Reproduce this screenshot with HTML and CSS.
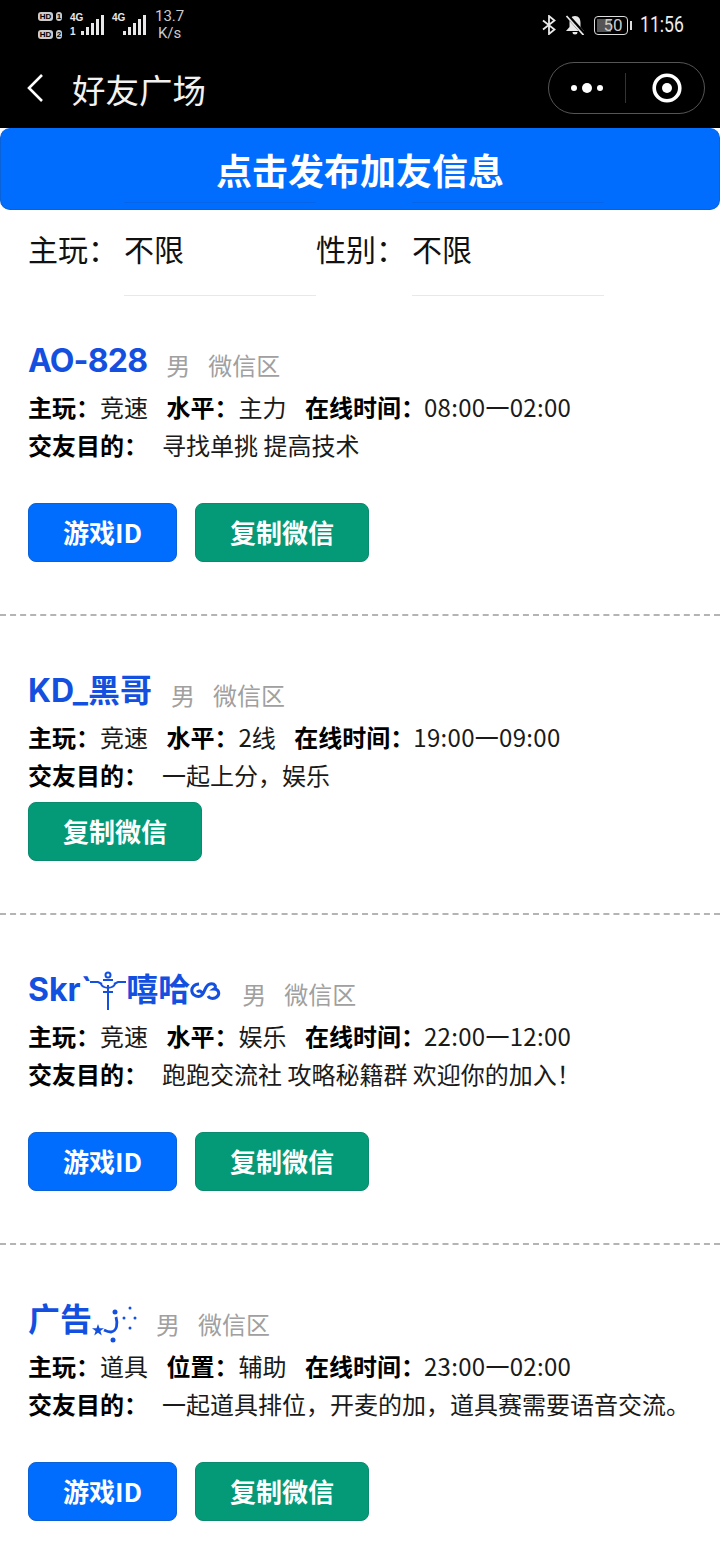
FILE: index.html
```html
<!DOCTYPE html>
<html lang="zh-CN">
<head>
    <meta charset="UTF-8">
    <meta name="viewport" content="width=device-width, initial-scale=1.0">
    <title>好友广场</title>
    <link rel="stylesheet" href="styles.css">
</head>
<body>
    <header class="top">
        <div class="status-bar">
            <div class="status-left">
                <div class="sim-col">
                    <div class="sim"><span class="hd">HD</span><span class="sim-no">1</span></div>
                    <div class="sim"><span class="hd">HD</span><span class="sim-no">2</span></div>
                </div>
                <div class="signal">
                    <div class="net"><span>4G</span><span>1</span></div>
                    <svg width="23" height="20" viewBox="0 0 23 20"><g fill="#e8e8e8"><rect x="0" y="16" width="3" height="4"/><rect x="5" y="12" width="3" height="8"/><rect x="10" y="8" width="3" height="12"/><rect x="15" y="4" width="3" height="16"/><rect x="20" y="0" width="3" height="20"/></g></svg>
                </div>
                <div class="signal">
                    <div class="net"><span>4G</span><span>&nbsp;</span></div>
                    <svg width="23" height="20" viewBox="0 0 23 20"><g fill="#e8e8e8"><rect x="0" y="16" width="3" height="4"/><rect x="5" y="12" width="3" height="8"/><rect x="10" y="8" width="3" height="12"/><rect x="15" y="4" width="3" height="16"/><rect x="20" y="0" width="3" height="20"/></g></svg>
                </div>
                <div class="speed">13.7<br>K/s</div>
            </div>
            <div class="status-right">
                <svg width="14" height="20" viewBox="0 0 14 20"><path d="M1 5.500 12.500 14.500 7 19V1l5.500 4.500L1 14.500" fill="none" stroke="#e8e8e8" stroke-width="1.800"/></svg>
                <svg width="20" height="20" viewBox="0 0 20 20"><path d="M10 1C6 1 4.500 4 4.500 8v4L1 16h18l-3.500-4V8C15.500 4 14 1 10 1zM7.500 17a2.500 2.500 0 0 0 5 0z" fill="#e8e8e8"/><path d="M2 0l17 19" stroke="#000" stroke-width="4"/><path d="M1.500 1l17 19" stroke="#e8e8e8" stroke-width="1.800"/></svg>
                <div class="battery"><div class="battery-body"><span class="battery-fill"></span><span class="battery-num">50</span></div><span class="battery-cap"></span></div>
                <span class="clock">11:56</span>
            </div>
        </div>
        <div class="nav-bar">
            <svg class="back" width="18" height="30" viewBox="0 0 18 30"><path d="M16 2 3 15l13 13" fill="none" stroke="#fff" stroke-width="2.600"/></svg>
            <div class="nav-title">好友广场</div>
            <div class="capsule">
                <div class="capsule-dots"><i></i><i class="big"></i><i></i></div>
                <div class="capsule-line"></div>
                <svg width="30" height="30" viewBox="0 0 30 30"><circle cx="15" cy="15" r="12.800" fill="none" stroke="#fff" stroke-width="3.600"/><circle cx="15" cy="15" r="5" fill="#fff"/></svg>
            </div>
        </div>
    </header>

    <div class="publish">点击发布加友信息</div>

    <div class="filters">
        <div class="filter"><span class="filter-label">主玩&#65306;</span><span class="filter-value">不限</span></div>
        <div class="filter"><span class="filter-label">性别&#65306;</span><span class="filter-value">不限</span></div>
    </div>

    <section class="card card-a">
        <div class="name-row"><span class="name"><span class="tight">AO-828</span></span><span class="meta">男</span><span class="meta">微信区</span></div>
        <div class="info"><b>主玩&#65306;</b>竞速<b class="next">水平&#65306;</b>主力<b class="next">在线时间&#65306;</b><span class="time">08:00一02:00</span></div>
        <div class="info"><b class="goal">交友目的&#65306;</b>寻找单挑 提高技术</div>
        <div class="btns btns-far"><div class="btn btn-blue">游戏ID</div><div class="btn btn-green">复制微信</div></div>
    </section>

    <section class="card card-b">
        <div class="name-row"><span class="name">KD_黑哥</span><span class="meta">男</span><span class="meta">微信区</span></div>
        <div class="info"><b>主玩&#65306;</b>竞速<b class="next">水平&#65306;</b>2线<b class="next">在线时间&#65306;</b><span class="time">19:00一09:00</span></div>
        <div class="info"><b class="goal">交友目的&#65306;</b>一起上分&#65292;娱乐</div>
        <div class="btns btns-near"><div class="btn btn-green">复制微信</div></div>
    </section>

    <section class="card card-c">
        <div class="name-row">
            <span class="name">Skr`<svg class="orn-staff" width="36" height="42" viewBox="0 0 36 42"><g fill="none" stroke="#1450e0" stroke-width="2"><path d="M0 13h8l4 2M36 13h-8l-4 2M18 16v25"/><circle cx="18" cy="6" r="2.500"/><path d="M13 11h10M11 15c2 5 12 5 14 0M13 23h10"/></g></svg>嘻哈<svg class="orn-curl" width="33" height="24" viewBox="0 0 33 24"><path d="M9 6C4 6 1 10 2 14s7 6 10 3 3-10 8-11 7 3 4 5c5 0 7 6 1 9-3 1-6 0-7-2M7 14c2-2 4-1 5 1" fill="none" stroke="#1450e0" stroke-width="3"/></svg></span>
            <span class="meta">男</span><span class="meta">微信区</span>
        </div>
        <div class="info"><b>主玩&#65306;</b>竞速<b class="next">水平&#65306;</b>娱乐<b class="next">在线时间&#65306;</b><span class="time">22:00一12:00</span></div>
        <div class="info"><b class="goal">交友目的&#65306;</b>跑跑交流社 攻略秘籍群 欢迎你的加入&#65281;</div>
        <div class="btns btns-far"><div class="btn btn-blue">游戏ID</div><div class="btn btn-green">复制微信</div></div>
    </section>

    <section class="card card-d">
        <div class="name-row">
            <span class="name">广告<svg class="orn-stars" width="45" height="46" viewBox="0 0 45 46"><g fill="#1450e0"><path d="m6 27 1.500 4.200H12l-3.600 2.700 1.400 4.500L6 35.700l-3.800 2.700 1.400-4.500L0 31.200h4.500z"/><circle cx="23" cy="15" r="2.500"/><circle cx="21" cy="43" r="2.500"/><circle cx="32" cy="21" r="1.500"/><circle cx="38" cy="11" r="1.500"/><circle cx="43" cy="21" r="1.500"/><circle cx="38" cy="31" r="1.500"/></g><path d="M24 20c2 7 1 14-5 15-3 0-5-1-7-2" fill="none" stroke="#1450e0" stroke-width="2.800"/></svg></span>
            <span class="meta">男</span><span class="meta">微信区</span>
        </div>
        <div class="info"><b>主玩&#65306;</b>道具<b class="next">位置&#65306;</b>辅助<b class="next">在线时间&#65306;</b><span class="time">23:00一02:00</span></div>
        <div class="info"><b class="goal">交友目的&#65306;</b>一起道具排位&#65292;开麦的加&#65292;道具赛需要语音交流。</div>
        <div class="btns btns-far"><div class="btn btn-blue">游戏ID</div><div class="btn btn-green">复制微信</div></div>
    </section>
</body>
</html>
```

FILE: styles.css
```css
body {
    margin: 0;
    background: #fff;
    color: #000;
    font-family: "Noto Sans CJK SC", "Noto Sans", sans-serif;
}

.top {
    background: #000;
    color: #fff;
    height: 128px;
}

.status-bar {
    height: 46px;
    padding: 4px 37px 0 38px;
    box-sizing: border-box;
    display: flex;
    justify-content: space-between;
    align-items: center;
}

.status-left {
    display: flex;
    align-items: center;
    gap: 8px;
}

.sim-col {
    display: flex;
    flex-direction: column;
    gap: 9px;
}

.sim {
    display: flex;
    gap: 3px;
}

.hd,
.sim-no {
    background: #ccc;
    color: #000;
    font: bold 8px/9px "Liberation Sans", sans-serif;
    border-radius: 3px;
    text-align: center;
}

.hd {
    width: 15px;
}

.sim-no {
    width: 6px;
}

.signal {
    display: flex;
    align-items: center;
}

.net {
    display: flex;
    flex-direction: column;
    font: bold 10px/14px "Liberation Sans", sans-serif;
    width: 11px;
    color: #e8e8e8;
    white-space: nowrap;
}

.speed {
    margin-left: 1px;
    font: 15px/17px "Roboto", sans-serif;
    color: #ccc;
    text-align: center;
}

.status-right {
    display: flex;
    align-items: center;
    gap: 9px;
}

.battery {
    display: flex;
    align-items: center;
    gap: 2px;
    margin-right: -1px;
}

.battery-body {
    position: relative;
    width: 32px;
    height: 17px;
    border: 1.500px solid #ddd;
    border-radius: 4px;
    text-align: center;
    font: 17px/17px "Roboto", sans-serif;
    color: #ccc;
}

.battery-fill {
    position: absolute;
    left: 2px;
    top: 2px;
    bottom: 2px;
    width: 14px;
    background: #555;
}

.battery-num {
    position: relative;
    left: 2px;
}

.battery-cap {
    width: 2px;
    height: 9px;
    background: #ddd;
}

.clock {
    width: 43px;
    font: 22px/26px "Roboto", sans-serif;
    color: #eee;
    white-space: nowrap;
    transform: scaleX(.8);
    transform-origin: left center;
}

.nav-bar {
    height: 82px;
    box-sizing: border-box;
    display: flex;
    align-items: center;
    padding: 2px 15px 0 26px;
}

.back {
    margin-right: 28px;
}

.nav-title {
    flex: 1;
    margin-top: 2px;
    font-size: 33.500px;
    line-height: 40px;
    color: #f2f2f2;
}

.capsule {
    width: 157px;
    height: 52px;
    box-sizing: border-box;
    border: 1px solid #555;
    border-radius: 26px;
    display: flex;
    align-items: center;
    padding-left: 22px;
}

.capsule-dots {
    width: 32px;
    margin-right: 22px;
    display: flex;
    align-items: center;
    justify-content: space-between;
}

.capsule-dots i {
    width: 6px;
    height: 6px;
    border-radius: 50%;
    background: #fff;
}

.capsule-dots i.big {
    width: 10px;
    height: 10px;
}

.capsule-line {
    width: 1px;
    height: 30px;
    background: #333;
    margin-right: 26px;
}

.publish {
    height: 82px;
    box-sizing: border-box;
    background: #006dff;
    border: 1px solid #0a62d6;
    border-top-color: #006dff;
    border-radius: 10px;
    color: #fff;
    font-size: 36px;
    font-weight: 700;
    line-height: 80px;
    text-align: center;
}

.filters {
    height: 86px;
    display: flex;
    padding-left: 28px;
}

.filter {
    width: 288px;
    display: flex;
    font-size: 30px;
    line-height: 76px;
    color: #111;
}

.filter-label {
    width: 96px;
    white-space: nowrap;
}

.filter-value {
    position: relative;
    width: 192px;
    border-bottom: 1px solid #e8e8e8;
}

/* picker's top border, lies over the blue bar */
.filter-value::before {
    content: "";
    position: absolute;
    left: 0;
    right: 0;
    top: -8px;
    height: 1px;
    background: #0564e8;
}

.card {
    padding: 0 0 0 28px;
    border-bottom: 2px dashed #b4b4b4;
    box-sizing: border-box;
}

.card-a {
    height: 320px;
    padding-top: 42px;
}

.card-b {
    height: 299px;
    padding-top: 52px;
}

.card-c {
    height: 330px;
    padding-top: 52px;
}

.card-d {
    border-bottom: 0;
    padding-top: 52px;
}

.name-row {
    display: flex;
    align-items: flex-end;
    height: 46px;
    margin-bottom: 4px;
}

.name {
    display: flex;
    align-items: center;
    font-size: 32px;
    line-height: 46px;
    font-weight: 700;
    color: #1450e0;
    font-family: "Inter", "Noto Sans CJK SC", sans-serif;
    margin-right: 19px;
}

.tight {
    letter-spacing: -.8px;
}

.orn-staff {
    margin-left: -2px;
}

.meta {
    font-size: 24px;
    line-height: 38px;
    color: #a0a0a0;
    margin-right: 16px;
}

.meta:last-child {
    margin-left: 2px;
    margin-right: 0;
}

.info {
    font-size: 24px;
    line-height: 38px;
    color: #1a1a1a;
    white-space: nowrap;
}

.info b {
    color: #000;
}

.info b.next {
    margin-left: 18.500px;
}

.info b.goal {
    margin-right: 14px;
}

.time {
    margin-left: -1px;
    letter-spacing: .3px;
}

.btns {
    display: flex;
    gap: 18px;
}

.btns-far {
    margin-top: 39px;
}

.btns-near {
    margin-top: 8px;
}

.btn {
    height: 59px;
    box-sizing: border-box;
    border-radius: 8px;
    color: #fff;
    font-size: 26px;
    font-weight: 700;
    line-height: 55px;
    text-align: center;
}

.btn-blue {
    width: 149px;
    background: #006dff;
    border: 1px solid #0a62d6;
}

.btn-green {
    width: 174px;
    background: #049a78;
    border: 1px solid #0a8a6e;
}
```
